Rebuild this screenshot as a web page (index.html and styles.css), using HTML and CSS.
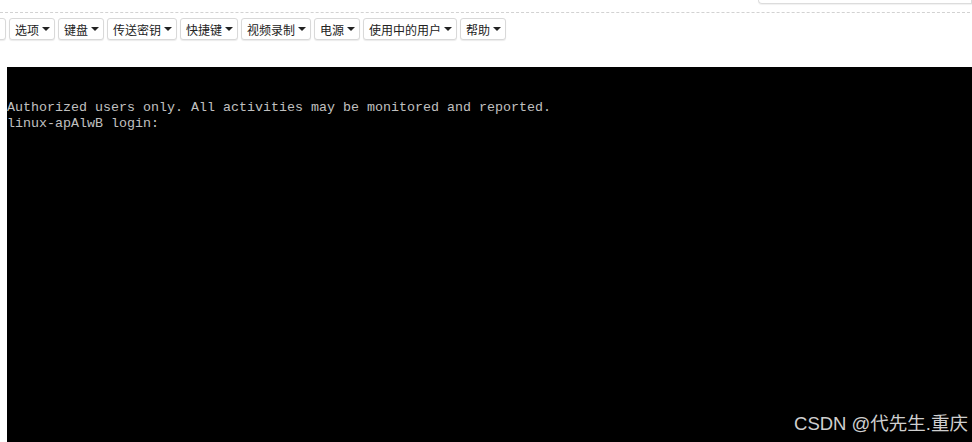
FILE: index.html
```html
<!DOCTYPE html>
<html lang="zh-CN">
<head>
	<meta charset="UTF-8">
	<title>远程控制台</title>
	<link rel="stylesheet" href="styles.css">
</head>
<body>
	<div class="top">
		<div class="top-panel"></div>
	</div>

	<div class="toolbar">
		<button class="menu menu-cut"></button>
		<button class="menu">选项<span class="caret"></span></button>
		<button class="menu">键盘<span class="caret"></span></button>
		<button class="menu">传送密钥<span class="caret"></span></button>
		<button class="menu">快捷键<span class="caret"></span></button>
		<button class="menu">视频录制<span class="caret"></span></button>
		<button class="menu">电源<span class="caret"></span></button>
		<button class="menu">使用中的用户<span class="caret"></span></button>
		<button class="menu">帮助<span class="caret"></span></button>
	</div>

	<div class="console">
		<pre class="screen">Authorized users only. All activities may be monitored and reported.
linux-apAlwB login: </pre>
		<div class="mark">CSDN @代先生.重庆</div>
	</div>
</body>
</html>
```

FILE: styles.css
```css
* {
	margin: 0;
	padding: 0;
	box-sizing: border-box;
}
body {
	background-color: white;
	font-family: "Noto Sans CJK SC", "Noto Sans", sans-serif;
	overflow: hidden;
	height: 442px;
}

/* Top */
.top {
	height: 13px;
	margin-right: 2px;
	display: flex;
	justify-content: flex-end;
	border-bottom: 1px dashed #d2d2d2;
}
.top-panel {
	width: 214px;
	height: 4px;
	margin-right: -2px;
	border: 1px solid #dcdcdc;
	border-top: none;
	border-bottom-left-radius: 4px;
	box-shadow: 0 1px 1px rgba(0, 0, 0, .06);
}

/* Toolbar */
.toolbar {
	display: flex;
	gap: 3px;
	margin-left: -40px;
	padding-top: 5px;
	height: 54px;
}
.menu {
	height: 22px;
	padding: 0 4px 0 5px;
	display: flex;
	align-items: center;
	border: 1px solid #d9d9d9;
	border-radius: 3px;
	background-color: white;
	box-shadow: 0 1px 1px rgba(0, 0, 0, .08);
	font-family: "Noto Sans CJK SC", sans-serif;
	font-size: 12px;
	color: #222;
	cursor: pointer;
}
.menu-cut {
	width: 46px;
}
.caret {
	margin-left: 3px;
	width: 0;
	height: 0;
	border-top: 4px solid #222;
	border-left: 4px solid transparent;
	border-right: 4px solid transparent;
}

/* Console */
.console {
	position: relative;
	margin-left: 7px;
	height: 375px;
	background-color: black;
	padding-top: 33px;
}
.screen {
	font-family: "Liberation Mono", "DejaVu Sans Mono", monospace;
	font-size: 13.33px;
	line-height: 16px;
	color: #c0c0c0;
}
.mark {
	position: absolute;
	right: 4px;
	bottom: 7px;
	font-family: "Liberation Sans", "Noto Sans CJK SC", sans-serif;
	font-size: 18.5px;
	color: #cfcfcf;
}
```
